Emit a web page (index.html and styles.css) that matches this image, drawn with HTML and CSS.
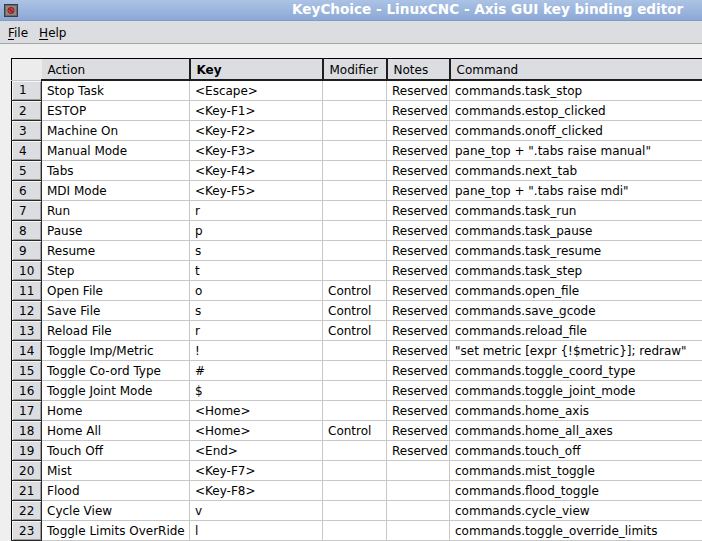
FILE: index.html
```html
<!DOCTYPE html>
<html>
<head>
<meta charset="utf-8">
<link rel="stylesheet" href="styles.css">
</head>
<body>
<div class="titlebar">
  <span class="winicon"><svg width="14" height="13" viewBox="0 0 14 13"><rect x="0.5" y="0.5" width="13" height="12" fill="#6a6a6a" stroke="#3c3c3c"/><rect x="2" y="2" width="10" height="9" fill="#8a8a8a"/><circle cx="7" cy="6.5" r="3.2" fill="#c23a3a" stroke="#8a1e1e" stroke-width="0.8"/><line x1="4.8" y1="4.3" x2="9.2" y2="8.7" stroke="#5a1010" stroke-width="0.9"/></svg></span>
  <span class="title">KeyChoice - LinuxCNC - Axis GUI key binding editor</span>
</div>
<div class="menubar">
  <span class="menu"><u>F</u>ile</span>
  <span class="menu"><u>H</u>elp</span>
</div>
<div class="content">
<table class="grid">
  <colgroup>
    <col class="c-num"><col class="c-action"><col class="c-key"><col class="c-mod"><col class="c-notes"><col class="c-cmd">
  </colgroup>
  <thead>
    <tr><th class="corner"></th><th>Action</th><th class="bold">Key</th><th>Modifier</th><th>Notes</th><th>Command</th></tr>
  </thead>
  <tbody>
    <tr><td class="num">1</td><td>Stop Task</td><td>&lt;Escape&gt;</td><td></td><td>Reserved</td><td>commands.task_stop</td></tr>
    <tr><td class="num">2</td><td>ESTOP</td><td>&lt;Key-F1&gt;</td><td></td><td>Reserved</td><td>commands.estop_clicked</td></tr>
    <tr><td class="num">3</td><td>Machine On</td><td>&lt;Key-F2&gt;</td><td></td><td>Reserved</td><td>commands.onoff_clicked</td></tr>
    <tr><td class="num">4</td><td>Manual Mode</td><td>&lt;Key-F3&gt;</td><td></td><td>Reserved</td><td>pane_top + ".tabs raise manual"</td></tr>
    <tr><td class="num">5</td><td>Tabs</td><td>&lt;Key-F4&gt;</td><td></td><td>Reserved</td><td>commands.next_tab</td></tr>
    <tr><td class="num">6</td><td>MDI Mode</td><td>&lt;Key-F5&gt;</td><td></td><td>Reserved</td><td>pane_top + ".tabs raise mdi"</td></tr>
    <tr><td class="num">7</td><td>Run</td><td>r</td><td></td><td>Reserved</td><td>commands.task_run</td></tr>
    <tr><td class="num">8</td><td>Pause</td><td>p</td><td></td><td>Reserved</td><td>commands.task_pause</td></tr>
    <tr><td class="num">9</td><td>Resume</td><td>s</td><td></td><td>Reserved</td><td>commands.task_resume</td></tr>
    <tr><td class="num">10</td><td>Step</td><td>t</td><td></td><td>Reserved</td><td>commands.task_step</td></tr>
    <tr><td class="num">11</td><td>Open File</td><td>o</td><td>Control</td><td>Reserved</td><td>commands.open_file</td></tr>
    <tr><td class="num">12</td><td>Save File</td><td>s</td><td>Control</td><td>Reserved</td><td>commands.save_gcode</td></tr>
    <tr><td class="num">13</td><td>Reload File</td><td>r</td><td>Control</td><td>Reserved</td><td>commands.reload_file</td></tr>
    <tr><td class="num">14</td><td>Toggle Imp/Metric</td><td>!</td><td></td><td>Reserved</td><td>"set metric [expr {!$metric}]; redraw"</td></tr>
    <tr><td class="num">15</td><td>Toggle Co-ord Type</td><td>#</td><td></td><td>Reserved</td><td>commands.toggle_coord_type</td></tr>
    <tr><td class="num">16</td><td>Toggle Joint Mode</td><td>$</td><td></td><td>Reserved</td><td>commands.toggle_joint_mode</td></tr>
    <tr><td class="num">17</td><td>Home</td><td>&lt;Home&gt;</td><td></td><td>Reserved</td><td>commands.home_axis</td></tr>
    <tr><td class="num">18</td><td>Home All</td><td>&lt;Home&gt;</td><td>Control</td><td>Reserved</td><td>commands.home_all_axes</td></tr>
    <tr><td class="num">19</td><td>Touch Off</td><td>&lt;End&gt;</td><td></td><td>Reserved</td><td>commands.touch_off</td></tr>
    <tr><td class="num">20</td><td>Mist</td><td>&lt;Key-F7&gt;</td><td></td><td></td><td>commands.mist_toggle</td></tr>
    <tr><td class="num">21</td><td>Flood</td><td>&lt;Key-F8&gt;</td><td></td><td></td><td>commands.flood_toggle</td></tr>
    <tr><td class="num">22</td><td>Cycle View</td><td>v</td><td></td><td></td><td>commands.cycle_view</td></tr>
    <tr><td class="num">23</td><td>Toggle Limits OverRide</td><td>l</td><td></td><td></td><td>commands.toggle_override_limits</td></tr>
  </tbody>
</table>
</div>
</body>
</html>
```
FILE: styles.css
```css
html, body {
  margin: 0;
  padding: 0;
  width: 702px;
  height: 541px;
  overflow: hidden;
  background: #efefef;
  font-family: "DejaVu Sans", sans-serif;
  font-size: 12px;
  color: #000;
}
.titlebar {
  height: 20px;
  background: linear-gradient(#abc3e4, #8ca8d6);
  border-bottom: 1px solid #7f9bc8;
  display: flex;
  align-items: center;
  white-space: nowrap;
}
.winicon {
  display: flex;
  margin-left: 4px;
}
.title {
  margin-left: 274px;
  margin-top: -2px;
  color: #fff;
  font-weight: bold;
  font-size: 13.6px;
}
.menubar {
  height: 20px;
  padding-top: 2px;
  background: #dcdde0;
  border-bottom: 1px solid #a4a4a4;
  display: flex;
  align-items: center;
  gap: 11px;
  padding-left: 8px;
}
.menu u { text-decoration: underline; text-underline-offset: 2px; }
.content {
  padding: 14px 0 0 11px;
}
.grid {
  border-collapse: collapse;
  table-layout: fixed;
  width: 870px;
  background: #fff;
  border: 1px solid #000;
}
.c-num { width: 30px; }
.c-action { width: 148px; }
.c-key { width: 133px; }
.c-mod { width: 64px; }
.c-notes { width: 63px; }
.c-cmd { width: 432px; }
.grid th {
  height: 19px;
  padding: 1px 0 0 6px;
  background: #dcdde0;
  font-weight: normal;
  text-align: left;
  border-right: 2px solid #1e1e1e;
  border-bottom: 2px solid #1e1e1e;
  white-space: nowrap;
  overflow: hidden;
}
.grid th.bold { font-weight: bold; }
.grid th.corner {
  background: #ececec;
  border-right: none;
  border-bottom: 1px solid #c8c8c8;
}
.grid td {
  height: 19px;
  padding: 0 0 0 5px;
  border: 1px solid #c8c8c8;
  white-space: nowrap;
  overflow: hidden;
}
.grid td.num {
  padding-left: 7px;
  background: #dcdde0;
  border: none;
  border-right: 1px solid #2a2a2a;
  border-bottom: 1px solid #2a2a2a;
  box-shadow: inset 1px 1px 0 #f6f6f6, inset -1px -1px 0 #9a9a9a;
}
```
